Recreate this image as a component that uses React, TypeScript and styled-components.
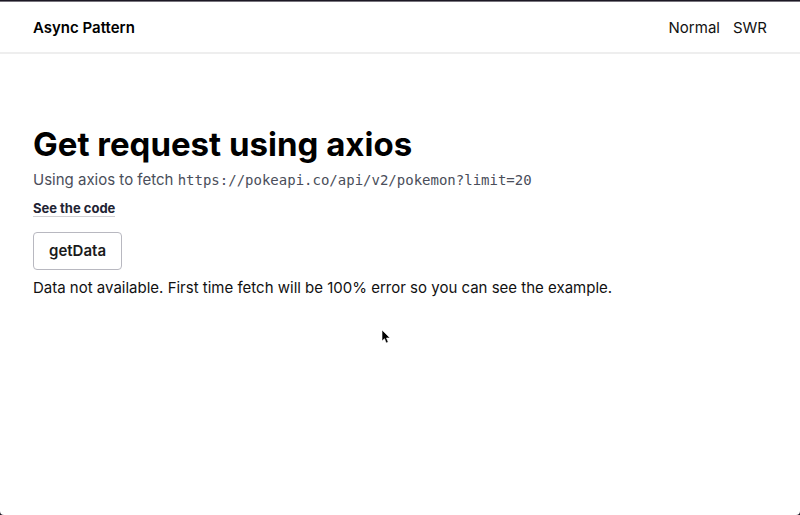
import React from "react";
import styled, { createGlobalStyle } from "styled-components";

const GlobalStyle = createGlobalStyle`
  *, *::before, *::after { box-sizing: border-box; }
  html { background: #1c1824; }
  body {
    margin: 0;
    font-family: Inter, sans-serif;
    font-size: 15px;
    line-height: 24px;
    color: #111;
  }
`;

const Page = styled.div`
  min-height: 100vh;
  background: #fff;
  border-top: 1px solid #1c1824;
  border-radius: 0 0 4px 4px;
  box-shadow: inset 0 1px #77747c;
`;

const Header = styled.header`
  display: flex;
  align-items: center;
  justify-content: space-between;
  height: 53px;
  padding: 3px 33px 0;
  border-bottom: 2px solid #eee;
`;

const Brand = styled.a`
  color: #000;
  font-weight: 600;
  text-decoration: none;
`;

const Nav = styled.nav`
  display: flex;
  gap: 13px;
`;

const NavLink = styled.a`
  color: #111;
  text-decoration: none;
`;

const Main = styled.main`
  display: flex;
  flex-direction: column;
  align-items: flex-start;
  padding: 69px 33px 0;
`;

const Title = styled.h1`
  margin: 0;
  color: #000;
  font-size: 33px;
  line-height: 42px;
  font-weight: 700;
`;

const Subtitle = styled.p`
  margin: 3px 0 0;
  color: #4a4e5a;
`;

const Code = styled.code`
  font-family: "DejaVu Sans Mono", monospace;
  font-size: 14px;
`;

const CodeLink = styled.a`
  margin-top: 8px;
  border-bottom: 1px solid #d0d0d4;
  color: #1f2433;
  font-size: 13px;
  line-height: 16px;
  font-weight: 700;
  text-decoration: none;
`;

const Button = styled.button`
  margin-top: 15px;
  padding: 0 15px;
  height: 38px;
  border: 1px solid #b8b8c0;
  border-radius: 4px;
  background: #fff;
  color: #1a1a1a;
  font: 600 15px/24px Inter, sans-serif;
`;

const Status = styled.p`
  margin: 6px 0 0;
`;

const Pointer = styled.svg`
  position: absolute;
  left: 381px;
  top: 329px;
`;

export default function App() {
  return (
    <Page>
      <GlobalStyle />
      <Header>
        <Brand href="#">Async Pattern</Brand>
        <Nav>
          <NavLink href="#normal">Normal</NavLink>
          <NavLink href="#swr">SWR</NavLink>
        </Nav>
      </Header>
      <Main>
        <Title>Get request using axios</Title>
        <Subtitle>
          Using axios to fetch <Code>https://pokeapi.co/api/v2/pokemon?limit=20</Code>
        </Subtitle>
        <CodeLink href="#code">See the code</CodeLink>
        <Button type="button">getData</Button>
        <Status>Data not available. First time fetch will be 100% error so you can see the example.</Status>
      </Main>
      <Pointer width="10" height="15" viewBox="0 0 10 15" aria-hidden="true">
        <path d="M1 1v11l2.5-2.3L5.2 14l2-.9L5.5 9H9z" fill="#000" stroke="#fff" strokeWidth="0.6" />
      </Pointer>
    </Page>
  );
}
